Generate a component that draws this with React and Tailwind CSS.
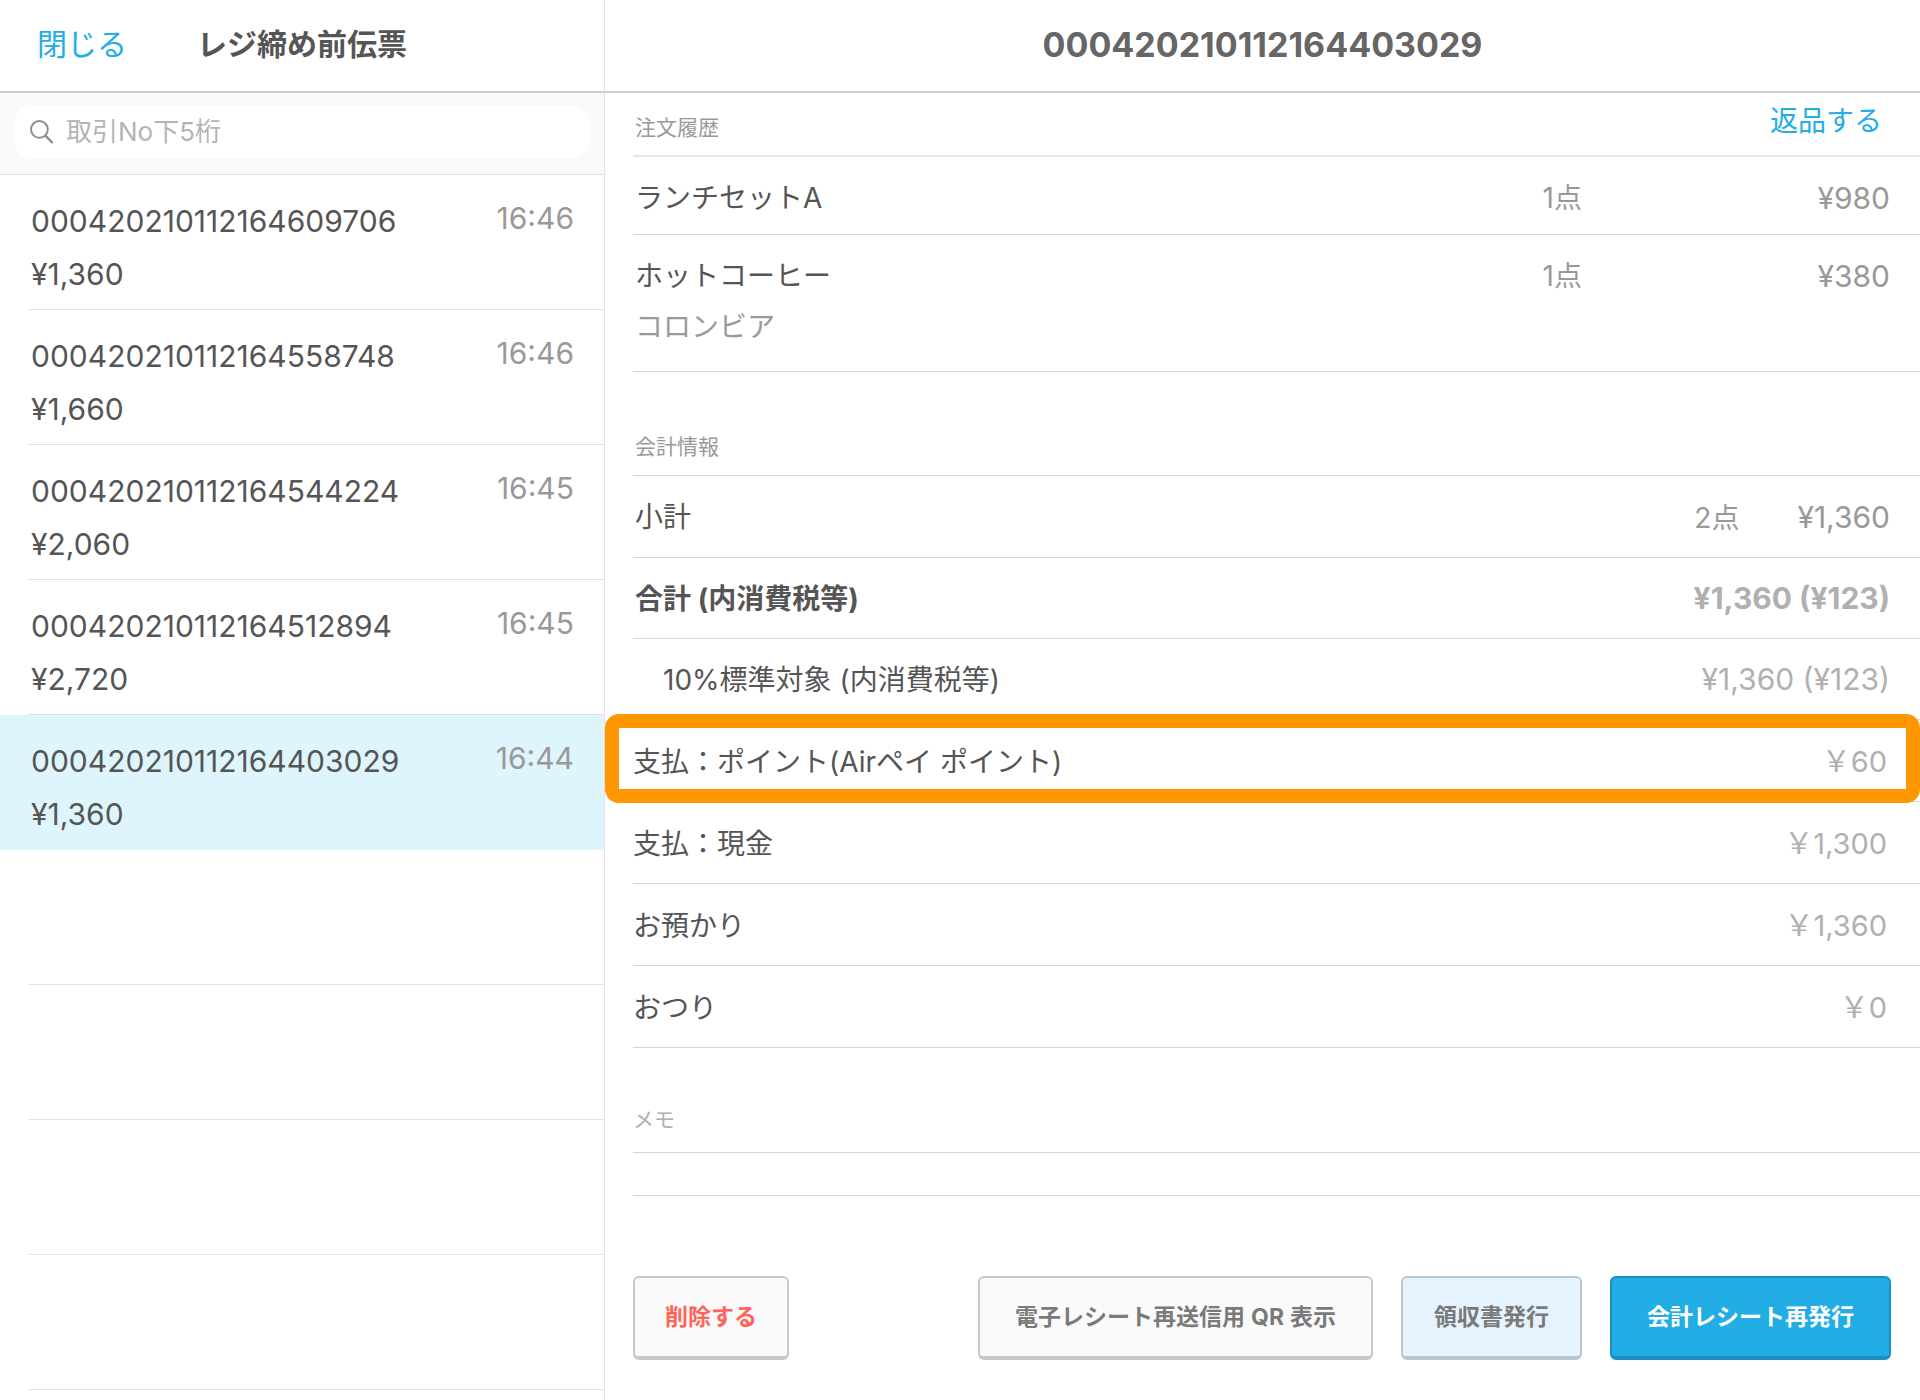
import clsx from "clsx";

const slips = [
  { no: "000420210112164609706", amount: "¥1,360", time: "16:46" },
  { no: "000420210112164558748", amount: "¥1,660", time: "16:46" },
  { no: "000420210112164544224", amount: "¥2,060", time: "16:45" },
  { no: "000420210112164512894", amount: "¥2,720", time: "16:45" },
  { no: "000420210112164403029", amount: "¥1,360", time: "16:44" },
];

const selectedNo = "000420210112164403029";

const orders = [
  { name: "ランチセットA", count: "1点", price: "¥980" },
  { name: "ホットコーヒー", option: "コロンビア", count: "1点", price: "¥380" },
];

const payments = [
  { label: "支払：ポイント(Airペイ ポイント)", value: "￥60", highlight: true },
  { label: "支払：現金", value: "￥1,300" },
  { label: "お預かり", value: "￥1,360" },
  { label: "おつり", value: "￥0" },
];

function SearchIcon() {
  return (
    <svg
      viewBox="0 0 24 24"
      className="size-6 text-[#8e8e8e]"
      fill="none"
      stroke="currentColor"
      strokeWidth="2"
      aria-hidden="true"
    >
      <circle cx="9.4" cy="9.4" r="8.4" />
      <path d="M15.4 15.6 22.6 23" strokeWidth="2.5" />
    </svg>
  );
}

function SlipItem({ slip, selected }) {
  return (
    <li className={clsx("h-[135px]", selected ? "bg-[#dff5fe]" : "pl-7")}>
      <button
        type="button"
        className={clsx(
          "flex h-full w-full items-start justify-between border-b pr-[30px] text-left",
          selected ? "border-[#dff5fe] pl-[31px]" : "border-[#e2e2e2] pl-[3px]"
        )}
      >
        <span className="flex flex-col pt-5 text-[30px] leading-[53px]">
          <span>{slip.no}</span>
          <span>{slip.amount}</span>
        </span>
        <span className="pt-[17px] text-[30px] leading-[53px] text-[#999]">{slip.time}</span>
      </button>
    </li>
  );
}

function SlipList() {
  return (
    <aside className="flex w-[605px] shrink-0 flex-col border-r border-[#e2e2e2]">
      <header className="grid h-[93px] grid-cols-[1fr_auto_1fr] items-center border-b-2 border-[#cbcbcb] pb-0.5">
        <button type="button" className="justify-self-start pl-[37px] text-[30px] text-[#22ade5]">
          閉じる
        </button>
        <h1 className="text-[30px] font-bold">レジ締め前伝票</h1>
      </header>
      <div className="h-[82px] border-b border-[#e2e2e2] bg-[#f9fbfb] px-[14px] pt-[13px]">
        <div className="flex h-[52px] items-center gap-3 rounded-[18px] bg-white px-4">
          <label htmlFor="slip-search" className="shrink-0">
            <SearchIcon />
          </label>
          <input
            id="slip-search"
            type="search"
            aria-label="取引No下5桁"
            placeholder="取引No下5桁"
            className="h-[50px] min-w-0 flex-1 bg-transparent pb-0.5 text-[26px] leading-[48px] outline-none placeholder:text-[#b4b4b4]"
          />
        </div>
      </div>
      <ul>
        {slips.map((slip) => (
          <SlipItem key={slip.no} slip={slip} selected={slip.no === selectedNo} />
        ))}
        {[0, 1, 2, 3].map((i) => (
          <li key={i} className="h-[135px] pl-7">
            <div className="h-full border-b border-[#e2e2e2]" />
          </li>
        ))}
      </ul>
    </aside>
  );
}

function OrderTable() {
  return (
    <table className="w-full">
      <tbody>
        {orders.map((order) => (
          <tr key={order.name} className="border-b border-[#d6d6d6] align-top leading-[51px]">
            <td className="pt-4 pb-2.5 pl-0.5 text-[28px]">
              {order.name}
              {order.option && <p className="pb-2 text-[#999]">{order.option}</p>}
            </td>
            <td className="pt-4 text-right text-[28px] text-[#999]">{order.count}</td>
            <td className="w-[338px] pt-4 pr-[30px] text-right text-[30px] text-[#999]">
              {order.price}
            </td>
          </tr>
        ))}
      </tbody>
    </table>
  );
}

function AccountTable() {
  return (
    <table className="w-full text-[28px]">
      <tbody>
        <tr className="h-[81px] border-b border-[#d6d6d6]">
          <td className="pt-0.5 pl-0.5">小計</td>
          <td className="pt-0.5 pr-[30px] text-right text-[#999]">
            <span className="mr-[58px]">2点</span>
            <span className="text-[30px]">¥1,360</span>
          </td>
        </tr>
        <tr className="h-[81px] border-b border-[#d6d6d6] font-bold">
          <td className="pt-0.5 pl-0.5">合計 (内消費税等)</td>
          <td className="pt-0.5 pr-[30px] text-right text-[30px] text-[#b0b0b0]">¥1,360 (¥123)</td>
        </tr>
        <tr className="h-[81px] border-b border-[#d6d6d6]">
          <td className="pt-0.5 pl-[30px]">10%標準対象 (内消費税等)</td>
          <td className="pt-0.5 pr-[30px] text-right text-[30px] text-[#b0b0b0]">¥1,360 (¥123)</td>
        </tr>
        {payments.map((row) => (
          <tr key={row.label} className="relative h-[82px] border-b border-[#d6d6d6]">
            <td className="pt-[3px]">
              {row.label}
              {row.highlight && (
                <span className="pointer-events-none absolute -top-[5px] right-0 -bottom-[3px] -left-7 rounded-[14px] border-14 border-[#ff9800]" />
              )}
            </td>
            <td className="pt-[3px] pr-[33px] text-right text-[29px] text-[#b0b0b0]">
              {row.value}
            </td>
          </tr>
        ))}
      </tbody>
    </table>
  );
}

function ActionButton({ className, children }) {
  return (
    <button
      type="button"
      className={clsx(
        "h-[84px] rounded-md border-2 border-b-4 pt-0.5 text-[23px] font-bold",
        className
      )}
    >
      {children}
    </button>
  );
}

function SlipDetail() {
  return (
    <main className="flex min-w-0 flex-1 flex-col">
      <header className="flex h-[93px] items-center justify-center border-b-2 border-[#cbcbcb] pb-0.5">
        <h2 className="text-[34px] font-bold text-[#666]">{selectedNo}</h2>
      </header>
      <div className="pl-7">
        <section>
          <div className="flex h-16 items-center justify-between border-b-2 border-[#e6e6e6] pr-[38px] pl-0.5">
            <h3 className="pt-2 text-[21px] text-[#999]">注文履歴</h3>
            <button type="button" className="pb-1.5 text-[28px] text-[#22ade5]">
              返品する
            </button>
          </div>
          <OrderTable />
        </section>
        <section>
          <h3 className="border-b border-[#d6d6d6] pt-[59px] pb-3 pl-0.5 text-[21px] leading-8 text-[#999]">
            会計情報
          </h3>
          <AccountTable />
        </section>
        <section>
          <h3 className="border-b border-[#d6d6d6] pt-14 pb-4 text-[21px] leading-8 text-[#b0b0b0]">
            メモ
          </h3>
          <div className="h-[43px] border-b border-[#d6d6d6]" />
        </section>
        <footer className="flex gap-7 pt-20 pr-[29px]">
          <ActionButton className="mr-auto border-[#c8c8c8] bg-[#fafafa] px-[30px] text-[#ff6359]">
            削除する
          </ActionButton>
          <ActionButton className="border-[#c8c8c8] bg-[#fafafa] px-[35px] text-[#7a7a7a]">
            電子レシート再送信用<span className="mx-1.5">QR</span>表示
          </ActionButton>
          <ActionButton className="border-[#b8c6d0] bg-[#e5f3fe] px-[31px] text-[#7a7a7a]">
            領収書発行
          </ActionButton>
          <ActionButton className="border-[#1a8fc0] bg-[#22ade5] px-[35px] text-white">
            会計レシート再発行
          </ActionButton>
        </footer>
      </div>
    </main>
  );
}

export default function App() {
  return (
    <div
      lang="ja"
      className="flex min-h-screen bg-white font-['Inter','Noto_Sans_CJK_JP',sans-serif] text-[#555]"
    >
      <SlipList />
      <SlipDetail />
    </div>
  );
}
